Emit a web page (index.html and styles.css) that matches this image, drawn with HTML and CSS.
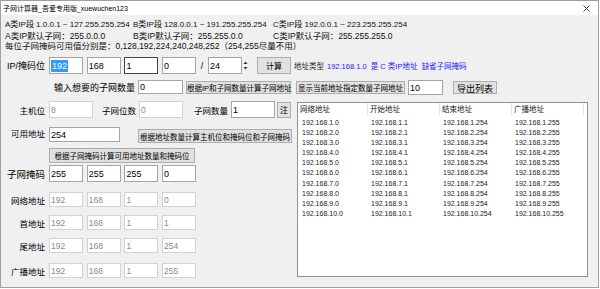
FILE: index.html
```html
<!DOCTYPE html>
<html lang="zh-CN">
<head>
  <meta charset="UTF-8" />
  <meta name="viewport" content="width=device-width, initial-scale=1" />
  <title>子网计算器_吾爱专用版_xuewuchen123</title>
  <link rel="stylesheet" href="styles.css">
</head>
<body>

  <div class="window">
    <div class="titlebar">
      <span class="title">子网计算器_吾爱专用版_xuewuchen123</span>
      <svg class="close" width="7" height="7" viewBox="0 0 7 7">
        <path d="M0.5 0.5 L6.5 6.5 M6.5 0.5 L0.5 6.5" stroke="#444" stroke-width="1" fill="none" />
      </svg>
    </div>

    <div class="info">
      <div class="info-row line-1">
        <span>A类IP段 1.0.0.1 ~ 127.255.255.254</span>
        <span>B类IP段 128.0.0.1 ~ 191.255.255.254</span>
        <span>C类IP段 192.0.0.1 ~ 223.255.255.254</span>
      </div>
      <div class="info-row line-2">
        <span>A类IP默认子网：255.0.0.0</span>
        <span>B类IP默认子网：255.255.0.0</span>
        <span>C类IP默认子网：255.255.255.0</span>
      </div>
      <div class="info-note">每位子网掩码可用值分别是：0,128,192,224,240,248,252（254,255尽量不用）</div>
    </div>

    <div class="main">
      <div class="left">
        <div class="row row-ip">
          <span class="label label-ip">IP/掩码位</span>
          <div class="quad">
            <div class="field field-sel"><span class="selected">192</span></div>
            <input class="field" value="168" />
            <input class="field field-focus" value="1" />
            <input class="field" value="0" />
          </div>
          <span class="slash">/</span>
          <input class="field field-prefix" value="24" />
          <div class="spin">
            <svg width="7" height="17" viewBox="0 0 7 17">
              <path d="M1.5 7 L3.5 4.5 L5.5 7 Z" fill="#333" />
              <path d="M1.5 10 L3.5 12.5 L5.5 10 Z" fill="#333" />
            </svg>
          </div>
          <button class="btn btn-calc">计算</button>
        </div>

        <div class="row row-count">
          <span class="label label-count">输入想要的子网数量</span>
          <input class="field field-count" value="0" />
          <button class="btn btn-count">根据IP和子网数量计算子网地址</button>
        </div>

        <div class="row row-host">
          <span class="label">主机位</span>
          <input class="field field-mid field-off" value="8" />
          <span class="label label-bits">子网位数</span>
          <input class="field field-mid field-off" value="0" />
          <span class="label label-num">子网数量</span>
          <input class="field field-mid" value="1" />
          <button class="btn btn-note">注</button>
        </div>

        <div class="row row-avail">
          <span class="label">可用地址</span>
          <input class="field field-avail" value="254" />
          <button class="btn btn-avail">根据地址数量计算主机位和掩码位和子网掩码</button>
        </div>

        <div class="row row-maskbtn">
          <button class="btn btn-mask">根据子网掩码计算可用地址数量和掩码位</button>
        </div>

        <div class="row row-mask">
          <span class="label label-mask">子网掩码</span>
          <div class="quad">
            <input class="field" value="255" />
            <input class="field" value="255" />
            <input class="field" value="255" />
            <input class="field" value="0" />
          </div>
        </div>

        <div class="row row-addr row-net">
          <span class="label">网络地址</span>
          <div class="quad">
            <input class="field field-off" value="192" />
            <input class="field field-off" value="168" />
            <input class="field field-off" value="1" />
            <input class="field field-off" value="0" />
          </div>
        </div>

        <div class="row row-addr row-first">
          <span class="label">首地址</span>
          <div class="quad">
            <input class="field field-off" value="192" />
            <input class="field field-off" value="168" />
            <input class="field field-off" value="1" />
            <input class="field field-off" value="1" />
          </div>
        </div>

        <div class="row row-addr row-last">
          <span class="label">尾地址</span>
          <div class="quad">
            <input class="field field-off" value="192" />
            <input class="field field-off" value="168" />
            <input class="field field-off" value="1" />
            <input class="field field-off" value="254" />
          </div>
        </div>

        <div class="row row-addr row-bcast">
          <span class="label">广播地址</span>
          <div class="quad">
            <input class="field field-off" value="192" />
            <input class="field field-off" value="168" />
            <input class="field field-off" value="1" />
            <input class="field field-off" value="255" />
          </div>
        </div>
      </div>

      <div class="right">
        <div class="type-line">
          <span class="type-label">地址类型</span>
          <span class="type-value">192.168.1.0&nbsp; 是 C 类IP地址&nbsp; 缺省子网掩码</span>
        </div>

        <div class="right-row">
          <button class="btn btn-show">显示当前地址指定数量子网地址</button>
          <input class="field field-show" value="10" />
          <button class="btn btn-export">导出列表</button>
        </div>

        <div class="list">
          <div class="list-head">
            <span class="col">网络地址</span>
            <span class="col">开始地址</span>
            <span class="col">结束地址</span>
            <span class="col">广播地址</span>
          </div>
          <div class="list-body" id="rows"></div>
        </div>
      </div>
    </div>
  </div>

  <script>
    const rows = document.getElementById('rows');

    for (let i = 1; i <= 10; i++) {
      const base = "192.168." + i + ".";
      const row = document.createElement('div');
      row.className = 'list-row';
      [base + "0", base + "1", base + "254", base + "255"].forEach(text => {
        const cell = document.createElement('span');
        cell.className = 'col';
        cell.textContent = text;
        row.appendChild(cell);
      });
      rows.appendChild(row);
    }
  </script>
</body>
</html>
```

FILE: styles.css
```css
body {
  margin: 0;
  font-family: "Liberation Sans", "Noto Sans CJK SC", sans-serif;
  color: #000;
  background: #fff;
}

.window {
  width: 597px;
  height: 286px;
  border: 1px solid #a0a0a0;
  background: #f0f0f0;
}

.titlebar {
  height: 14px;
  background: #fff;
  display: flex;
  align-items: center;
  justify-content: space-between;
  padding: 0 8px 0 2px;
  font-size: 7px;
}

.close {
  display: block;
}

/* class info lines */
.info {
  padding: 4px 0 0 4px;
  color: #111;
}

.info-row {
  display: grid;
  grid-template-columns: 128px 140px auto;
  white-space: nowrap;
}

.line-1 {
  height: 12px;
  line-height: 12px;
  font-size: 8px;
}

.line-2 {
  height: 10px;
  line-height: 10px;
  font-size: 8.5px;
}

.info-note {
  height: 10px;
  line-height: 10px;
  font-size: 8.5px;
  white-space: nowrap;
}

.main {
  display: grid;
  grid-template-columns: 293px 1fr;
  margin-top: 6px;
}

/* left column */
.row {
  display: flex;
  align-items: center;
}

.label {
  width: 44px;
  margin-right: 4px;
  text-align: right;
  font-size: 8.5px;
  white-space: nowrap;
  flex-shrink: 0;
}

.label-ip {
  font-size: 9px;
}

.label-mask {
  font-size: 9.5px;
}

.field {
  box-sizing: border-box;
  width: 34px;
  height: 100%;
  margin: 0;
  padding: 0 0 0 1px;
  border: 1px solid #a5a5a5;
  background: #fff;
  font-family: "Liberation Sans", sans-serif;
  font-size: 9px;
  color: #000;
  outline: none;
  flex-shrink: 0;
}

.field-sel {
  display: flex;
  align-items: center;
}

.selected {
  background: #3399ff;
  color: #fff;
  padding: 0 1px;
  line-height: 12px;
}

.field-focus {
  border-color: #444;
}

.field-off {
  border-color: #d2d2d2;
  color: #8a8a8a;
  font-size: 8.5px;
}

.quad {
  display: flex;
  gap: 3.7px;
  height: 100%;
}

.btn {
  box-sizing: border-box;
  margin: 0;
  padding: 0;
  border: 1px solid #adadad;
  background: #e1e1e1;
  font-family: "Liberation Sans", "Noto Sans CJK SC", sans-serif;
  font-size: 7.5px;
  color: #000;
  white-space: nowrap;
  flex-shrink: 0;
}

.row-ip {
  height: 17px;
}

.slash {
  width: 12px;
  text-align: center;
  font-size: 9px;
}

.field-prefix {
  width: 34px;
}

.spin {
  width: 8px;
  height: 17px;
}

.spin svg {
  display: block;
}

.btn-calc {
  width: 34px;
  height: 17px;
  margin-left: 7px;
  font-size: 8px;
}

.row-count {
  margin-top: 6px;
  height: 14px;
}

.label-count {
  width: 134px;
  margin-right: 3px;
  font-size: 9px;
}

.field-count {
  width: 45px;
}

.btn-count {
  width: 105px;
  height: 13px;
  margin-left: 3px;
}

.row-host {
  margin-top: 7px;
  height: 17px;
}

.field-mid {
  width: 44px;
}

.label-bits {
  width: 43px;
  margin-right: 3px;
}

.label-num {
  width: 45px;
  margin-right: 3px;
}

.btn-note {
  width: 14px;
  height: 16px;
  margin-left: 2px;
  font-size: 8px;
}

.row-avail {
  margin-top: 9px;
  height: 16px;
  align-items: flex-start;
}

.field-avail {
  width: 71px;
  height: 15px;
}

.btn-avail {
  width: 154px;
  height: 14px;
  margin-top: 2px;
  margin-left: 18px;
}

.row-maskbtn {
  margin-top: 5px;
  height: 15px;
  padding-left: 48px;
}

.btn-mask {
  width: 146px;
  height: 15px;
}

.row-mask {
  margin-top: 2px;
  height: 17px;
}

.row-addr {
  height: 15px;
}

.row-net {
  margin-top: 10px;
}

.row-first,
.row-last {
  margin-top: 8px;
}

.row-bcast {
  margin-top: 10px;
}

/* right column */
.type-line {
  height: 17px;
  display: flex;
  align-items: center;
  font-size: 7.5px;
  white-space: nowrap;
}

.type-label {
  margin-right: 3px;
  color: #222;
}

.type-value {
  color: #2424ff;
}

.right-row {
  margin-top: 6px;
  height: 15px;
  display: flex;
  align-items: center;
}

.btn-show {
  width: 109px;
  height: 13px;
  margin-left: 2px;
}

.field-show {
  width: 35px;
  margin-left: 3px;
}

.btn-export {
  width: 44px;
  height: 13px;
  margin-left: 10px;
  font-size: 9px;
}

.list {
  box-sizing: border-box;
  width: 291px;
  height: 175px;
  margin: 7px 0 0 3px;
  border: 1px solid #8d9096;
  background: #fff;
}

.list-head {
  display: flex;
  height: 13px;
  align-items: center;
  font-size: 7.5px;
  color: #222;
}

.list-head .col {
  box-sizing: border-box;
  height: 13px;
  line-height: 13px;
  padding-left: 2px;
  border-right: 1px solid #e5e5e5;
}

.col {
  width: 72px;
  flex-shrink: 0;
}

.col:first-child {
  width: 70px;
}

.list-body {
  padding-top: 2px;
}

.list-row {
  display: flex;
  height: 10.1px;
  line-height: 10px;
  font-size: 7px;
  color: #222;
}

.list-row .col {
  padding-left: 3px;
  box-sizing: border-box;
}

.list-row .col:first-child {
  padding-left: 4px;
}
```
